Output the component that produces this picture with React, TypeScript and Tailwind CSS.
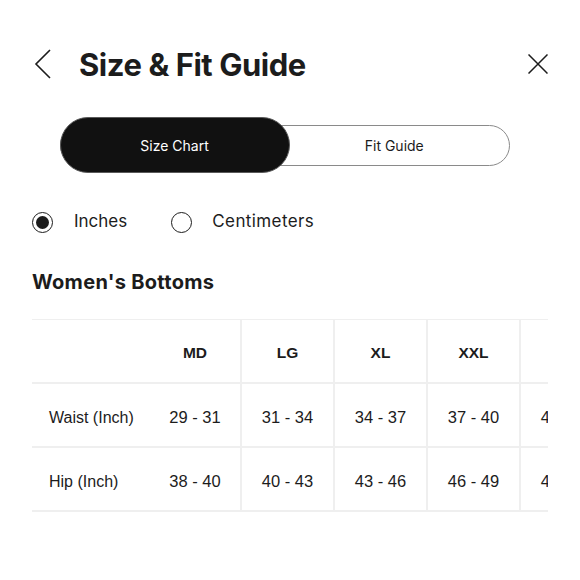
import React from "react";

const sizes = ["MD", "LG", "XL", "XXL", "3XL"];
const rows = [
  { label: "Waist (Inch)", values: ["29 - 31", "31 - 34", "34 - 37", "37 - 40", "40 - 43"] },
  { label: "Hip (Inch)", values: ["38 - 40", "40 - 43", "43 - 46", "46 - 49", "49 - 52"] },
];

export default function App() {
  return (
    <div className="w-[580px] h-[580px] bg-white text-[#1c1c1c] px-8 pt-10 overflow-hidden" style={{ fontFamily: "Inter, 'Liberation Sans', sans-serif" }}>
      {/* header */}
      <div className="h-12 flex items-center">
        <svg width="18" height="30" viewBox="0 0 18 30" className="ml-[2px]">
          <path d="M16 1 L2 15 L16 29" fill="none" stroke="#1c1c1c" strokeWidth="1.6" />
        </svg>
        <div className="ml-[27px] text-[31px] font-bold tracking-[-0.45px] leading-none">Size &amp; Fit Guide</div>
        <div className="flex-1" />
        <svg width="20" height="20" viewBox="0 0 20 20">
          <path d="M0.5 0.5 L19.5 19.5 M19.5 0.5 L0.5 19.5" stroke="#1c1c1c" strokeWidth="1.5" fill="none" />
        </svg>
      </div>

      {/* segmented */}
      <div className="mt-[29px] ml-[28px] w-[450px] h-[56px] flex items-center">
        <div className="w-full h-[41px] rounded-full border-[1.5px] border-[#8a8a8a] flex items-center">
          <div className="-ml-[1.5px] w-[230px] h-[56px] shrink-0 rounded-full bg-[#111111] border border-[#5a5a5a] flex items-center justify-center text-white text-[14px]">
            Size Chart
          </div>
          <div className="flex-1 flex items-center justify-center pr-[10px] text-[14px] text-[#1c1c1c]">Fit Guide</div>
        </div>
      </div>

      {/* radios */}
      <div className="mt-[37px] h-6 flex items-center text-[17px]">
        <div className="w-[21px] h-[21px] rounded-full border-[1.5px] border-[#1c1c1c] flex items-center justify-center">
          <div className="w-[13px] h-[13px] rounded-full bg-[#1c1c1c]" />
        </div>
        <span className="ml-[21px]">Inches</span>
        <div className="ml-[44px] w-[21px] h-[21px] rounded-full border-[1.5px] border-[#1c1c1c]" />
        <span className="ml-[20px] tracking-[0.4px]">Centimeters</span>
      </div>

      {/* section title */}
      <div className="mt-[36px] h-6 flex items-center text-[20px] font-bold tracking-[0.3px]">Women's Bottoms</div>

      {/* table */}
      <div className="mt-[25px] w-[516px] overflow-hidden" style={{ fontFamily: "'Liberation Sans', Arial, sans-serif" }}>
        <div className="grid grid-cols-[118px_92px_93px_93px_93px_93px] w-[582px] border-t border-[#efefef]">
          <div className="h-[64px] border-b-2 border-[#efefef]" />
          {sizes.map((s) => (
            <div key={s} className="h-[64px] pt-[3px] border-b-2 border-r-2 border-[#efefef] flex items-center justify-center text-[15.5px] font-bold">
              {s}
            </div>
          ))}
          {rows.map((r) => (
            <React.Fragment key={r.label}>
              <div className="h-[64px] pt-[5px] border-b-2 border-[#efefef] flex items-center pl-[17px] text-[16px]">{r.label}</div>
              {r.values.map((v, i) => (
                <div key={i} className="h-[64px] pt-[5px] border-b-2 border-r-2 border-[#efefef] flex items-center justify-center text-[16.5px]">
                  {v}
                </div>
              ))}
            </React.Fragment>
          ))}
        </div>
      </div>
    </div>
  );
}
